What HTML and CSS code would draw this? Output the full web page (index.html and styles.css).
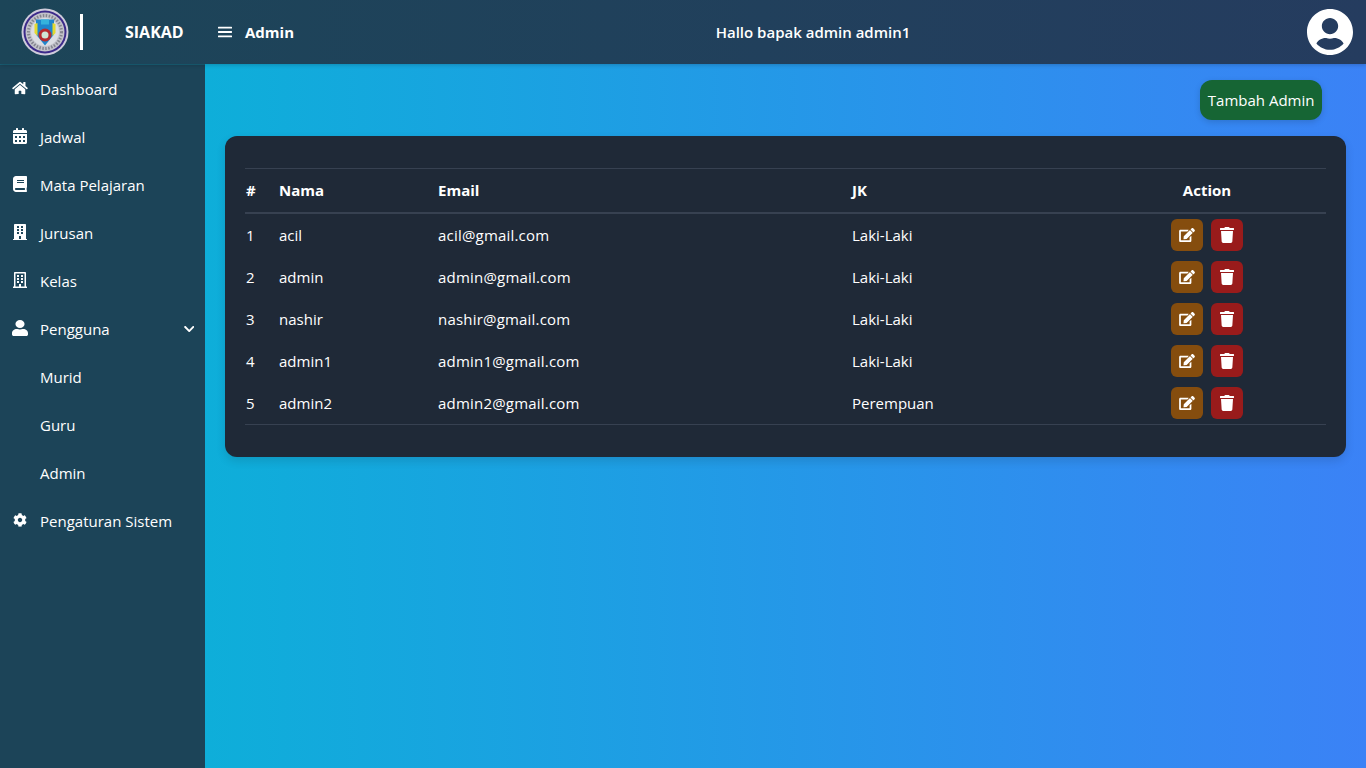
FILE: index.html
```html
<!DOCTYPE html>
<html lang="id">
<head>
    <meta charset="UTF-8">
    <meta name="viewport" content="width=device-width, initial-scale=1.0">
    <title>SIAKAD - Admin</title>
    <link rel="stylesheet" href="styles.css">
</head>
<body>
    <svg class="icon-defs" xmlns="http://www.w3.org/2000/svg">
        <symbol id="i-bars" viewBox="0 0 448 512" preserveAspectRatio="none"><path d="M16 132h416c8.837 0 16-7.163 16-16V76c0-8.837-7.163-16-16-16H16C7.163 60 0 67.163 0 76v40c0 8.837 7.163 16 16 16zm0 160h416c8.837 0 16-7.163 16-16v-40c0-8.837-7.163-16-16-16H16c-8.837 0-16 7.163-16 16v40c0 8.837 7.163 16 16 16zm0 160h416c8.837 0 16-7.163 16-16v-40c0-8.837-7.163-16-16-16H16c-8.837 0-16 7.163-16 16v40c0 8.837 7.163 16 16 16z"/></symbol>
        <symbol id="i-avatar" viewBox="0 0 496 512"><path d="M248 8C111 8 0 119 0 256s111 248 248 248 248-111 248-248S385 8 248 8zm0 96c48.6 0 88 39.4 88 88s-39.4 88-88 88-88-39.4-88-88 39.4-88 88-88zm0 344c-58.7 0-111.3-26.6-146.5-68.2 18.8-35.4 55.6-59.8 98.5-59.8 2.4 0 4.8.4 7.1 1.1 13 4.2 26.6 6.9 40.9 6.9 14.3 0 28-2.7 40.9-6.9 2.3-.7 4.7-1.1 7.1-1.1 42.9 0 79.7 24.4 98.5 59.8C359.3 421.4 306.7 448 248 448z"/></symbol>
        <symbol id="i-home" viewBox="0 0 576 512"><path d="M280.37 148.26L96 300.11V464a16 16 0 0 0 16 16l112.06-.29a16 16 0 0 0 15.92-16V368a16 16 0 0 1 16-16h64a16 16 0 0 1 16 16v95.64a16 16 0 0 0 16 16.05L464 480a16 16 0 0 0 16-16V300L295.67 148.26a12.19 12.19 0 0 0-15.3 0zM571.6 251.47L488 182.56V44.05a12 12 0 0 0-12-12h-56a12 12 0 0 0-12 12v72.61L318.47 43a48 48 0 0 0-61 0L4.34 251.47a12 12 0 0 0-1.6 16.9l25.5 31A12 12 0 0 0 45.15 301l235.22-193.74a12.19 12.19 0 0 1 15.3 0L530.9 301a12 12 0 0 0 16.9-1.6l25.5-31a12 12 0 0 0-1.7-16.93z"/></symbol>
        <symbol id="i-calendar" viewBox="0 0 448 512"><path d="M0 464c0 26.5 21.5 48 48 48h352c26.5 0 48-21.5 48-48V192H0v272zm320-196c0-6.6 5.4-12 12-12h40c6.6 0 12 5.4 12 12v40c0 6.6-5.4 12-12 12h-40c-6.6 0-12-5.4-12-12v-40zm0 128c0-6.6 5.4-12 12-12h40c6.6 0 12 5.4 12 12v40c0 6.6-5.4 12-12 12h-40c-6.6 0-12-5.4-12-12v-40zM192 268c0-6.6 5.4-12 12-12h40c6.6 0 12 5.4 12 12v40c0 6.6-5.4 12-12 12h-40c-6.6 0-12-5.4-12-12v-40zm0 128c0-6.6 5.4-12 12-12h40c6.6 0 12 5.4 12 12v40c0 6.6-5.4 12-12 12h-40c-6.6 0-12-5.4-12-12v-40zM64 268c0-6.6 5.4-12 12-12h40c6.6 0 12 5.4 12 12v40c0 6.6-5.4 12-12 12H76c-6.6 0-12-5.4-12-12v-40zm0 128c0-6.6 5.4-12 12-12h40c6.6 0 12 5.4 12 12v40c0 6.6-5.4 12-12 12H76c-6.6 0-12-5.4-12-12v-40zM400 64h-48V16c0-8.8-7.2-16-16-16h-32c-8.8 0-16 7.2-16 16v48H160V16c0-8.8-7.2-16-16-16h-32c-8.8 0-16 7.2-16 16v48H48C21.5 64 0 85.5 0 112v48h448v-48c0-26.5-21.5-48-48-48z"/></symbol>
        <symbol id="i-book" viewBox="0 0 448 512"><path d="M448 360V24c0-13.3-10.7-24-24-24H96C43 0 0 43 0 96v320c0 53 43 96 96 96h328c13.3 0 24-10.7 24-24v-16c0-7.5-3.5-14.3-8.9-18.7-4.2-15.4-4.2-59.3 0-74.7 5.4-4.3 8.9-11.1 8.9-18.6zM128 134c0-3.3 2.7-6 6-6h212c3.3 0 6 2.7 6 6v20c0 3.3-2.7 6-6 6H134c-3.3 0-6-2.7-6-6v-20zm0 64c0-3.3 2.7-6 6-6h212c3.3 0 6 2.7 6 6v20c0 3.3-2.7 6-6 6H134c-3.3 0-6-2.7-6-6v-20zm253.4 250H96c-17.7 0-32-14.3-32-32 0-17.6 14.4-32 32-32h285.4c-1.9 17.1-1.9 46.9 0 64z"/></symbol>
        <symbol id="i-building" viewBox="0 0 448 512"><path d="M436 480h-20V24c0-13.255-10.745-24-24-24H56C42.745 0 32 10.745 32 24v456H12c-6.627 0-12 5.373-12 12v20h448v-20c0-6.627-5.373-12-12-12zM128 76c0-6.627 5.373-12 12-12h40c6.627 0 12 5.373 12 12v40c0 6.627-5.373 12-12 12h-40c-6.627 0-12-5.373-12-12V76zm0 96c0-6.627 5.373-12 12-12h40c6.627 0 12 5.373 12 12v40c0 6.627-5.373 12-12 12h-40c-6.627 0-12-5.373-12-12v-40zm52 148h-40c-6.627 0-12-5.373-12-12v-40c0-6.627 5.373-12 12-12h40c6.627 0 12 5.373 12 12v40c0 6.627-5.373 12-12 12zm76 160h-64v-84c0-6.627 5.373-12 12-12h40c6.627 0 12 5.373 12 12v84zm64-172c0 6.627-5.373 12-12 12h-40c-6.627 0-12-5.373-12-12v-40c0-6.627 5.373-12 12-12h40c6.627 0 12 5.373 12 12v40zm0-96c0 6.627-5.373 12-12 12h-40c-6.627 0-12-5.373-12-12v-40c0-6.627 5.373-12 12-12h40c6.627 0 12 5.373 12 12v40zm0-96c0 6.627-5.373 12-12 12h-40c-6.627 0-12-5.373-12-12V76c0-6.627 5.373-12 12-12h40c6.627 0 12 5.373 12 12v40z"/></symbol>
        <symbol id="i-building-o" viewBox="0 0 448 512"><path d="M128 148v-40c0-6.6 5.4-12 12-12h40c6.6 0 12 5.4 12 12v40c0 6.6-5.4 12-12 12h-40c-6.6 0-12-5.4-12-12zm140 12h40c6.6 0 12-5.4 12-12v-40c0-6.6-5.4-12-12-12h-40c-6.6 0-12 5.4-12 12v40c0 6.6 5.4 12 12 12zm-128 96h40c6.6 0 12-5.4 12-12v-40c0-6.6-5.4-12-12-12h-40c-6.6 0-12 5.4-12 12v40c0 6.6 5.4 12 12 12zm128 0h40c6.6 0 12-5.4 12-12v-40c0-6.6-5.4-12-12-12h-40c-6.6 0-12 5.4-12 12v40c0 6.6 5.4 12 12 12zm-76 84v-40c0-6.6-5.4-12-12-12h-40c-6.6 0-12 5.4-12 12v40c0 6.6 5.4 12 12 12h40c6.6 0 12-5.4 12-12zm76 12h40c6.6 0 12-5.4 12-12v-40c0-6.6-5.4-12-12-12h-40c-6.6 0-12 5.4-12 12v40c0 6.6 5.4 12 12 12zm180 124v36H0v-36c0-6.6 5.4-12 12-12h19.5V24c0-13.3 10.7-24 24-24h337c13.3 0 24 10.7 24 24v440H436c6.6 0 12 5.4 12 12zM79.5 463H192v-67c0-6.6 5.4-12 12-12h40c6.6 0 12 5.4 12 12v67h112.5V49L80 48l-.5 415z"/></symbol>
        <symbol id="i-user" viewBox="0 0 448 512" preserveAspectRatio="none"><path d="M224 256c70.7 0 128-57.3 128-128S294.7 0 224 0 96 57.3 96 128s57.3 128 128 128zm89.6 32h-16.7c-22.2 10.2-46.9 16-72.9 16s-50.6-5.8-72.9-16h-16.7C60.2 288 0 348.2 0 422.4V464c0 26.5 21.5 48 48 48h352c26.5 0 48-21.5 48-48v-41.6c0-74.2-60.2-134.4-134.4-134.4z"/></symbol>
        <symbol id="i-chevron" viewBox="0 0 448 512"><path d="M207.029 381.476L12.686 187.132c-9.373-9.373-9.373-24.569 0-33.941l22.667-22.667c9.357-9.357 24.522-9.375 33.901-.04L224 284.505l154.745-154.021c9.379-9.335 24.544-9.317 33.901.04l22.667 22.667c9.373 9.373 9.373 24.569 0 33.941L240.971 381.476c-9.373 9.372-24.569 9.372-33.942 0z"/></symbol>
        <symbol id="i-cog" viewBox="0 0 512 512"><path d="M487.4 315.7l-42.6-24.6c4.3-23.2 4.3-47 0-70.2l42.6-24.6c4.9-2.8 7.1-8.6 5.5-14-11.1-35.6-30-67.8-54.7-94.6-3.8-4.1-10-5.1-14.8-2.3L380.8 110c-17.9-15.4-38.5-27.3-60.8-35.1V25.8c0-5.6-3.9-10.5-9.4-11.7-36.7-8.2-74.3-7.8-109.2 0-5.5 1.2-9.4 6.1-9.4 11.7V75c-22.2 7.9-42.8 19.8-60.8 35.1L88.7 85.5c-4.9-2.8-11-1.9-14.8 2.3-24.7 26.7-43.6 58.9-54.7 94.6-1.7 5.4.6 11.2 5.5 14L67.3 221c-4.3 23.2-4.3 47 0 70.2l-42.6 24.6c-4.9 2.8-7.1 8.6-5.5 14 11.1 35.6 30 67.8 54.7 94.6 3.8 4.1 10 5.1 14.8 2.3l42.6-24.6c17.9 15.4 38.5 27.3 60.8 35.1v49.2c0 5.6 3.9 10.5 9.4 11.7 36.7 8.2 74.3 7.8 109.2 0 5.5-1.2 9.4-6.1 9.4-11.7v-49.2c22.2-7.9 42.8-19.8 60.8-35.1l42.6 24.6c4.9 2.8 11 1.9 14.8-2.3 24.7-26.7 43.6-58.9 54.7-94.6 1.5-5.5-.7-11.3-5.6-14.1zM256 336c-44.1 0-80-35.9-80-80s35.9-80 80-80 80 35.9 80 80-35.9 80-80 80z"/></symbol>
        <symbol id="i-edit" viewBox="0 0 576 512"><path d="M402.6 83.2l90.2 90.2c3.8 3.8 3.8 10 0 13.8L274.4 405.6l-92.8 10.3c-12.4 1.4-22.9-9.1-21.5-21.5l10.3-92.8L388.8 83.2c3.8-3.8 10-3.8 13.8 0zm162-22.9l-48.8-48.8c-15.2-15.2-39.9-15.2-55.2 0l-35.4 35.4c-3.8 3.8-3.8 10 0 13.8l90.2 90.2c3.8 3.8 10 3.8 13.8 0l35.4-35.4c15.2-15.3 15.2-40 0-55.2zM384 346.2V448H64V128h229.8c3.2 0 6.2-1.3 8.5-3.5l40-40c7.6-7.6 2.2-20.5-8.5-20.5H48C21.5 64 0 85.5 0 112v352c0 26.5 21.5 48 48 48h352c26.5 0 48-21.5 48-48V306.2c0-10.7-12.9-16-20.5-8.5l-40 40c-2.2 2.3-3.5 5.3-3.5 8.5z"/></symbol>
        <symbol id="i-trash" viewBox="0 0 448 512"><path d="M432 32H312l-9.4-18.7A24 24 0 0 0 281.1 0H166.8a23.72 23.72 0 0 0-21.4 13.3L136 32H16A16 16 0 0 0 0 48v32a16 16 0 0 0 16 16h416a16 16 0 0 0 16-16V48a16 16 0 0 0-16-16zM53.2 467a48 48 0 0 0 47.9 45h245.8a48 48 0 0 0 47.9-45L416 128H32z"/></symbol>
    </svg>

    <header class="topbar">
        <div class="brand">
            <svg class="logo" viewBox="0 0 48 48">
                <circle cx="24" cy="24" r="23.500" fill="#cfccdb"/>
                <circle cx="24" cy="24" r="21.500" fill="#3c2a8a"/>
                <circle cx="24" cy="24" r="19.500" fill="#c3c3ca"/>
                <circle cx="24" cy="24" r="16.500" fill="none" stroke="#85858f" stroke-width="3" stroke-dasharray="1.500 1.500"/>
                <circle cx="24" cy="24" r="14" fill="#dcdde3"/>
                <path d="M15 11.500h18v15l-9 11-9-11z" fill="#1f86cc"/>
                <path d="M13.500 16l3-1v13l-3-3zM34.500 16l-3-1v13l3-3z" fill="#e4d92e"/>
                <path d="M20 11.500h8v5h-8z" fill="#35b3dc"/>
                <circle cx="24" cy="27" r="6.500" fill="#b52b2e"/>
                <circle cx="24" cy="27" r="3.500" fill="#cfe5d5"/>
            </svg>
            <span class="brand-line"></span>
            <span class="brand-name">SIAKAD</span>
        </div>
        <div class="topbar-main">
            <div class="page-title">
                <svg class="icon-bars"><use href="#i-bars"/></svg>
                <span>Admin</span>
            </div>
            <div class="greeting">Hallo bapak admin admin1</div>
            <svg class="avatar"><use href="#i-avatar"/></svg>
        </div>
    </header>

    <div class="layout">
        <nav class="sidebar">
            <a class="nav-item"><span class="nav-icon"><svg class="icon-wide"><use href="#i-home"/></svg></span>Dashboard</a>
            <a class="nav-item"><span class="nav-icon"><svg class="icon"><use href="#i-calendar"/></svg></span>Jadwal</a>
            <a class="nav-item"><span class="nav-icon"><svg class="icon"><use href="#i-book"/></svg></span>Mata Pelajaran</a>
            <a class="nav-item"><span class="nav-icon"><svg class="icon"><use href="#i-building"/></svg></span>Jurusan</a>
            <a class="nav-item"><span class="nav-icon"><svg class="icon"><use href="#i-building-o"/></svg></span>Kelas</a>
            <a class="nav-item"><span class="nav-icon"><svg class="icon-user"><use href="#i-user"/></svg></span>Pengguna<svg class="chevron"><use href="#i-chevron"/></svg></a>
            <a class="nav-item nav-sub">Murid</a>
            <a class="nav-item nav-sub">Guru</a>
            <a class="nav-item nav-sub">Admin</a>
            <a class="nav-item"><span class="nav-icon"><svg class="icon-sm"><use href="#i-cog"/></svg></span>Pengaturan Sistem</a>
        </nav>

        <main class="content">
            <div class="toolbar">
                <button class="btn-add">Tambah Admin</button>
            </div>
            <section class="card">
                <table class="data-table">
                    <colgroup>
                        <col class="col-no">
                        <col class="col-name">
                        <col class="col-email">
                        <col class="col-jk">
                        <col class="col-action">
                    </colgroup>
                    <thead>
                        <tr>
                            <th>#</th>
                            <th>Nama</th>
                            <th>Email</th>
                            <th>JK</th>
                            <th class="center">Action</th>
                        </tr>
                    </thead>
                    <tbody>
                        <tr>
                            <td>1</td>
                            <td>acil</td>
                            <td class="email">acil@gmail.com</td>
                            <td>Laki-Laki</td>
                            <td class="cell-actions"><div class="actions"><button class="btn-icon btn-edit"><svg class="icon-edit"><use href="#i-edit"/></svg></button><button class="btn-icon btn-delete"><svg class="icon-trash"><use href="#i-trash"/></svg></button></div></td>
                        </tr>
                        <tr>
                            <td>2</td>
                            <td>admin</td>
                            <td class="email">admin@gmail.com</td>
                            <td>Laki-Laki</td>
                            <td class="cell-actions"><div class="actions"><button class="btn-icon btn-edit"><svg class="icon-edit"><use href="#i-edit"/></svg></button><button class="btn-icon btn-delete"><svg class="icon-trash"><use href="#i-trash"/></svg></button></div></td>
                        </tr>
                        <tr>
                            <td>3</td>
                            <td>nashir</td>
                            <td class="email">nashir@gmail.com</td>
                            <td>Laki-Laki</td>
                            <td class="cell-actions"><div class="actions"><button class="btn-icon btn-edit"><svg class="icon-edit"><use href="#i-edit"/></svg></button><button class="btn-icon btn-delete"><svg class="icon-trash"><use href="#i-trash"/></svg></button></div></td>
                        </tr>
                        <tr>
                            <td>4</td>
                            <td>admin1</td>
                            <td class="email">admin1@gmail.com</td>
                            <td>Laki-Laki</td>
                            <td class="cell-actions"><div class="actions"><button class="btn-icon btn-edit"><svg class="icon-edit"><use href="#i-edit"/></svg></button><button class="btn-icon btn-delete"><svg class="icon-trash"><use href="#i-trash"/></svg></button></div></td>
                        </tr>
                        <tr>
                            <td>5</td>
                            <td>admin2</td>
                            <td class="email">admin2@gmail.com</td>
                            <td>Perempuan</td>
                            <td class="cell-actions"><div class="actions"><button class="btn-icon btn-edit"><svg class="icon-edit"><use href="#i-edit"/></svg></button><button class="btn-icon btn-delete"><svg class="icon-trash"><use href="#i-trash"/></svg></button></div></td>
                        </tr>
                    </tbody>
                </table>
            </section>
        </main>
    </div>
</body>
</html>
```

FILE: styles.css
```css
:root {
    --side-bg: #1c4458;
    --card-bg: #1f2937;
    --line: #374151;
    --text: #ffffff;
}

* {
    box-sizing: border-box;
}

html, body {
    height: 100%;
}

body {
    margin: 0;
    display: flex;
    flex-direction: column;
    height: 768px;
    overflow: hidden;
    font-family: 'Open Sans', sans-serif;
    font-size: 15px;
    color: var(--text);
    background: linear-gradient(to right, #06b6d4, #3b82f6);
}

svg {
    fill: currentColor;
}

.icon-defs {
    display: none;
}

/* top bar */
.topbar {
    display: flex;
    flex: 0 0 64px;
    height: 64px;
    background: linear-gradient(to right, #1c4558, #253c5f);
    box-shadow: 0 1px 4px rgba(0, 0, 0, 0.2);
    position: relative;
}

.brand {
    display: flex;
    align-items: center;
    flex: 0 0 205px;
    padding-left: 21px;
}

.logo {
    width: 48px;
    height: 48px;
    filter: blur(0.4px);
}

.brand-line {
    width: 3px;
    height: 36px;
    margin-left: 11px;
    background: #fff;
}

.brand-name {
    margin-left: 42px;
    font-size: 16px;
    font-weight: 700;
}

.topbar-main {
    flex: 1;
    display: flex;
    align-items: center;
    justify-content: space-between;
    padding: 0 13px;
}

.page-title {
    display: flex;
    align-items: center;
    gap: 13px;
    font-weight: 700;
}

.icon-bars {
    width: 14px;
    height: 14px;
}

.greeting {
    margin-left: 25px;
    font-weight: 600;
}

.avatar {
    width: 46px;
    height: 48px;
}

/* sidebar */
.layout {
    flex: 1;
    display: flex;
    min-height: 0;
}

.sidebar {
    flex: 0 0 205px;
    background: var(--side-bg);
    border-top: 1px solid #1a6178;
}

.nav-item {
    display: flex;
    align-items: center;
    height: 48px;
    padding-right: 11px;
}

.nav-sub {
    padding-left: 40px;
}

.nav-icon {
    flex: 0 0 40px;
    display: flex;
    justify-content: center;
    margin-top: -3px;
}

.icon {
    width: 14px;
    height: 16px;
}

.icon-wide {
    width: 16px;
    height: 14px;
}

.icon-user {
    width: 16px;
    height: 16px;
}

.icon-sm {
    width: 14px;
    height: 14px;
}

.chevron {
    width: 10.5px;
    height: 12px;
    margin-left: auto;
}

/* content */
.content {
    flex: 1;
    padding: 16px 20px;
}

.toolbar {
    display: flex;
    justify-content: flex-end;
    padding-right: 24px;
    margin-bottom: 16px;
}

.btn-add {
    height: 40px;
    padding: 0 7.5px;
    border: none;
    border-radius: 12px;
    background: #166534;
    color: var(--text);
    font: inherit;
    box-shadow: 0 2px 6px rgba(0, 0, 0, 0.15);
}

.card {
    padding: 32px 20px;
    border-radius: 12px;
    background: var(--card-bg);
    box-shadow: 0 4px 10px rgba(0, 0, 0, 0.12);
}

.data-table {
    width: 100%;
    table-layout: fixed;
    border-collapse: separate;
    border-spacing: 0;
}

.col-no { width: 33px; }
.col-name { width: 159px; }
.col-email { width: 414px; }
.col-jk { width: 237px; }

.data-table th {
    height: 46px;
    padding: 0 0 2px 1px;
    text-align: left;
    font-weight: 700;
    border-top: 1px solid var(--line);
    border-bottom: 2px solid var(--line);
}

.data-table th.center {
    padding-left: 0;
    text-align: center;
}

.data-table td {
    height: 42px;
    padding: 0 0 0 1px;
}

.data-table td.cell-actions {
    padding-left: 0;
}

.data-table td.email {
    letter-spacing: 0.2px;
}

.data-table tbody tr:last-child td {
    height: 43px;
    border-bottom: 1px solid var(--line);
}

.actions {
    display: flex;
    justify-content: center;
    gap: 8px;
}

.btn-icon {
    display: flex;
    align-items: center;
    justify-content: center;
    width: 32px;
    height: 32px;
    padding: 0;
    border: none;
    border-radius: 6px;
    color: var(--text);
}

.btn-edit {
    background: #854d0e;
}

.btn-delete {
    background: #991b1b;
}

.icon-edit {
    width: 16px;
    height: 14px;
}

.icon-trash {
    width: 14px;
    height: 16px;
}
```
